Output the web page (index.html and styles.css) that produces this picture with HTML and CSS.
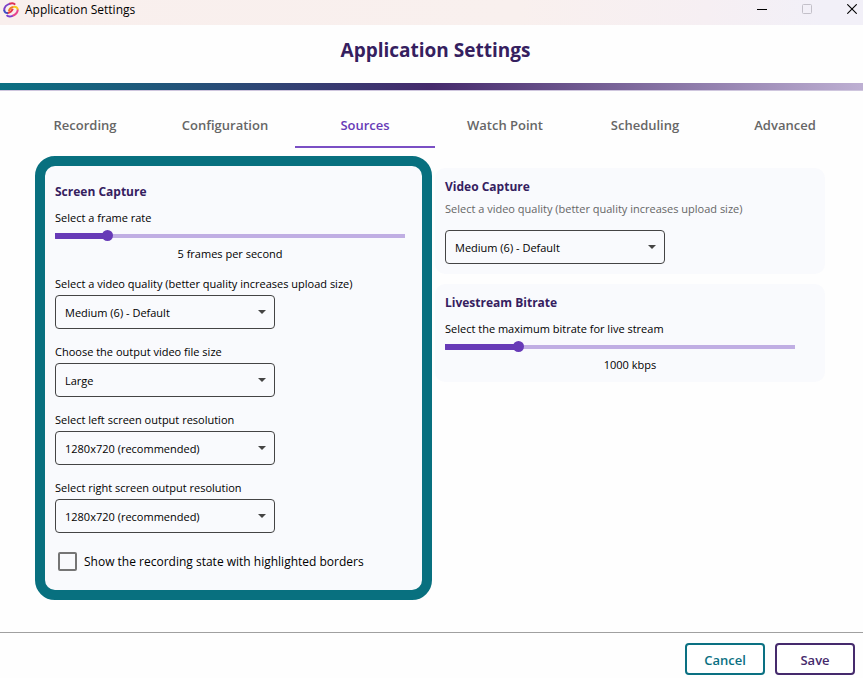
FILE: index.html
```html
<!DOCTYPE html>
<html lang="en">
<head>
    <meta charset="UTF-8">
    <meta name="viewport" content="width=device-width, initial-scale=1.0">
    <title>Application Settings</title>
    <link rel="stylesheet" href="styles.css">
</head>
<body>
    <div class="titlebar">
        <svg class="logo" width="16" height="16" viewBox="0 0 16 16" fill="none" stroke-width="2">
            <path d="M1.2 8.5C1 5.4 3.6 2.6 7 1.6" stroke="#7b3fc8"/>
            <path d="M6.5 1.8C8.8 1 11 1.3 12.2 2.6" stroke="#dd2f55"/>
            <path d="M1.2 8C1.4 10.4 3 11.3 5.2 10.9" stroke="#3b4bc4"/>
            <path d="M4.8 11C7.2 10.6 9 9.2 9.8 6.8" stroke="#e2364a"/>
            <path d="M5.8 9.2C6.4 6.8 8.2 5.2 10.6 4.9" stroke="#ef7a22"/>
            <path d="M10.2 5C13 4.4 14.8 5.6 14.8 8" stroke="#f6c81e"/>
            <path d="M14.8 7.6C14.6 10.4 12.4 12.9 9.2 14" stroke="#e8458c"/>
            <path d="M9.6 13.9C7 14.9 4.8 14.6 3.6 13.2" stroke="#7a3fd0"/>
        </svg>
        <span class="titlebar-text">Application Settings</span>
        <div class="window-buttons">
            <button type="button" aria-label="Minimize">
                <svg width="10" height="10" viewBox="0 0 10 10"><path d="M0 5.5h10" stroke="#000"/></svg>
            </button>
            <button type="button" aria-label="Maximize" disabled>
                <svg width="10" height="10" viewBox="0 0 10 10"><rect x=".5" y=".5" width="9" height="9" rx="1" fill="none" stroke="#c3c0c9"/></svg>
            </button>
            <button type="button" aria-label="Close">
                <svg width="10" height="10" viewBox="0 0 10 10"><path d="M.3 .3l9.4 9.4M9.7 .3L.3 9.7" stroke="#000" stroke-width="1.1"/></svg>
            </button>
        </div>
    </div>

    <header class="header">
        <h1>Application Settings</h1>
    </header>

    <nav class="tabs">
        <a href="#recording">Recording</a>
        <a href="#configuration">Configuration</a>
        <a href="#sources" class="active">Sources</a>
        <a href="#watch-point">Watch Point</a>
        <a href="#scheduling">Scheduling</a>
        <a href="#advanced">Advanced</a>
    </nav>

    <main class="content">
        <section class="card highlighted">
            <h2>Screen Capture</h2>
            <div class="slider-group">
                <label for="frame-rate">Select a frame rate</label>
                <input type="range" id="frame-rate" min="1" max="30" value="5" style="--fill: 15%">
                <output for="frame-rate">5 frames per second</output>
            </div>
            <div class="form-group">
                <label for="screen-quality">Select a video quality (better quality increases upload size)</label>
                <div class="select">
                    <select id="screen-quality"><option>Medium (6) - Default</option></select>
                </div>
            </div>
            <div class="form-group">
                <label for="file-size">Choose the output video file size</label>
                <div class="select">
                    <select id="file-size"><option>Large</option></select>
                </div>
            </div>
            <div class="form-group">
                <label for="left-resolution">Select left screen output resolution</label>
                <div class="select">
                    <select id="left-resolution"><option>1280x720 (recommended)</option></select>
                </div>
            </div>
            <div class="form-group">
                <label for="right-resolution">Select right screen output resolution</label>
                <div class="select">
                    <select id="right-resolution"><option>1280x720 (recommended)</option></select>
                </div>
            </div>
            <div class="checkbox">
                <input type="checkbox" id="borders">
                <label for="borders">Show the recording state with highlighted borders</label>
            </div>
        </section>

        <div class="column">
            <section class="card">
                <h2>Video Capture</h2>
                <div class="form-group spaced">
                    <label for="video-quality">Select a video quality (better quality increases upload size)</label>
                    <div class="select">
                        <select id="video-quality"><option>Medium (6) - Default</option></select>
                    </div>
                </div>
            </section>
            <section class="card">
                <h2>Livestream Bitrate</h2>
                <div class="slider-group">
                    <label for="bitrate">Select the maximum bitrate for live stream</label>
                    <input type="range" id="bitrate" min="0" max="5000" value="1000" style="--fill: 21%">
                    <output for="bitrate">1000 kbps</output>
                </div>
            </section>
        </div>
    </main>

    <footer class="footer">
        <button type="button" class="btn btn-cancel">Cancel</button>
        <button type="button" class="btn btn-save">Save</button>
    </footer>
</body>
</html>
```

FILE: styles.css
```css
* {
    box-sizing: border-box;
}
body {
    display: flex;
    flex-direction: column;
    min-height: 100vh;
    margin: 0;
    background-color: #fefefe;
    color: #000;
    font-family: "Segoe UI", "Open Sans", "Noto Sans", sans-serif;
    font-size: 12px;
    line-height: 16px;
}
h1, h2 {
    margin: 0;
    color: #35205f;
}

/* Window title bar */
.titlebar {
    display: flex;
    align-items: flex-start;
    height: 25px;
    padding: 2px 6px 0 3px;
    background: linear-gradient(to right, #f9efed, #f9f0ee 60%, #f6eff3 82%, #f2f0f8 95%);
}
.titlebar-text {
    margin-left: 6px;
}
.window-buttons {
    display: flex;
    gap: 35px;
    margin: 2px 0 0 auto;
}
.window-buttons button {
    display: flex;
    width: 10px;
    padding: 0;
    border: none;
    background: none;
}

.header {
    height: 65px;
    margin-bottom: 1px;
    padding: 10px 0 0 8px;
    border-bottom: 7px solid;
    border-image: linear-gradient(to right, #0a7082, #452a6c 50%, #beb0d3) 1;
    box-shadow: 0 1px #cfc6de;
    text-align: center;
}
.header h1 {
    font-size: 19px;
    line-height: 30px;
}

/* Tabs */
.tabs {
    display: grid;
    grid-template-columns: repeat(6, 1fr);
    padding: 10px 8px 0 15px;
}
.tabs a {
    padding: 14px 0 11px;
    border-bottom: 2px solid transparent;
    color: #666;
    font-size: 13px;
    font-weight: 600;
    line-height: 20px;
    text-align: center;
    text-decoration: none;
}
.tabs a.active {
    border-color: #7a4fc4;
    color: #673ab7;
}

/* Settings cards */
.content {
    display: grid;
    grid-template-columns: 397fr 390fr;
    gap: 3px;
    align-items: start;
    padding: 8px 38px 32px 35px;
    font-size: 11px;
}
.column {
    display: grid;
    gap: 10px;
    padding-top: 12px;
}
.card {
    padding: 9px 10px 10px;
    border-radius: 10px;
    background-color: #f9fafd;
}
.card h2 {
    font-size: 12px;
    line-height: 20px;
}
.highlighted {
    padding: 16px 17px 18px 10px;
    border: 10px solid #08707f;
    border-radius: 20px;
}
.slider-group {
    display: grid;
    padding-top: 8px;
}
.slider-group output {
    margin-top: 6px;
    line-height: 14px;
    text-align: center;
}
input[type="range"] {
    appearance: none;
    width: 100%;
    max-width: 350px;
    height: 11px;
    margin: 4px 0 0;
    background: linear-gradient(#673ab7, #673ab7) left center / var(--fill) 6px no-repeat,
                linear-gradient(#c0aee3, #c0aee3) center / 100% 4px no-repeat;
    border-radius: 3px;
}
input[type="range"]::-webkit-slider-thumb {
    appearance: none;
    width: 11px;
    height: 11px;
    border-radius: 50%;
    background-color: #673ab7;
}
.form-group {
    margin-top: 15px;
}
.form-group label {
    display: block;
    margin-bottom: 3px;
}
.form-group.spaced {
    margin-top: 4px;
}
.form-group.spaced label {
    margin-bottom: 13px;
    color: #666;
}
.select {
    display: grid;
    align-items: center;
    width: 220px;
}
.select select,
.select::after {
    grid-area: 1 / 1;
}
.select::after {
    content: "";
    justify-self: end;
    margin-right: 9px;
    border: 4px solid transparent;
    border-top-color: #444;
    border-bottom: none;
    pointer-events: none;
}
select {
    appearance: none;
    width: 100%;
    height: 34px;
    padding: 1px 9px 0;
    border: 1px solid #444;
    border-radius: 4px;
    background-color: transparent;
    color: #000;
    font: inherit;
}
.checkbox {
    display: flex;
    align-items: center;
    gap: 7px;
    margin-top: 17px;
    padding-left: 3px;
    font-size: 12px;
}
.checkbox label {
    padding-top: 2px;
    line-height: 20px;
}
.checkbox input {
    appearance: none;
    width: 19px;
    height: 19px;
    margin: 0;
    border: 2px solid #757575;
    border-radius: 2px;
}

/* Bottom buttons */
.footer {
    display: flex;
    justify-content: flex-end;
    gap: 10px;
    margin-top: auto;
    padding: 10px 8px 3px;
    border-top: 1px solid #a0a0a0;
}
.btn {
    width: 80px;
    height: 32px;
    padding: 1px 0 0;
    border: 2px solid;
    border-radius: 4px;
    background-color: #fff;
    font: 600 13px "Segoe UI", "Open Sans", "Noto Sans", sans-serif;
}
.btn-cancel {
    color: #0a7082;
}
.btn-save {
    color: #452a6c;
}
```
